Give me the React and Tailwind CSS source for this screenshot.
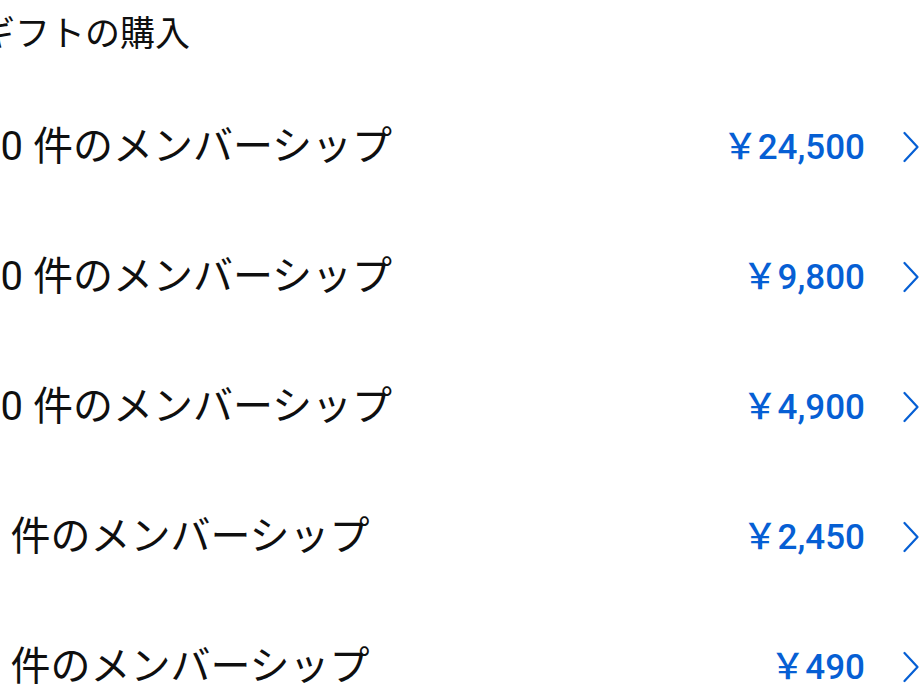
import React from "react";

const rows = [
  { n: "50", price: "24,500" },
  { n: "20", price: "9,800" },
  { n: "10", price: "4,900" },
  { n: "5", price: "2,450" },
  { n: "1", price: "490" },
];

function Chevron() {
  return (
    <svg width="16" height="32" viewBox="0 0 16 32" fill="none" className="shrink-0">
      <polyline points="1.5,2 14.5,16 1.5,30" stroke="#065fd4" strokeWidth="2.2" strokeLinecap="round" strokeLinejoin="round" />
    </svg>
  );
}

export default function App() {
  return (
    <div className="w-[921px] h-[693px] overflow-hidden bg-white font-[Roboto,'Noto_Sans_CJK_JP',sans-serif]">
      <div className="pr-[2px]">
        <div className="ml-[-20px] h-[68px] flex items-center text-[35px] text-[#0f0f0f] leading-none whitespace-nowrap">
          ギフトの購入
        </div>
        <div className="ml-[-22px] pt-[14px]">
          {rows.map((r) => (
            <div key={r.n} className="h-[130px] flex items-center justify-between">
              <div className="text-[40px] leading-none text-[#0f0f0f] whitespace-nowrap">
                {r.n} 件のメンバーシップ
              </div>
              <div className="flex items-center gap-[38px]">
                <div className="text-[35px] leading-none font-medium text-[#065fd4] whitespace-nowrap">
                  ￥{r.price}
                </div>
                <Chevron />
              </div>
            </div>
          ))}
        </div>
      </div>
    </div>
  );
}
